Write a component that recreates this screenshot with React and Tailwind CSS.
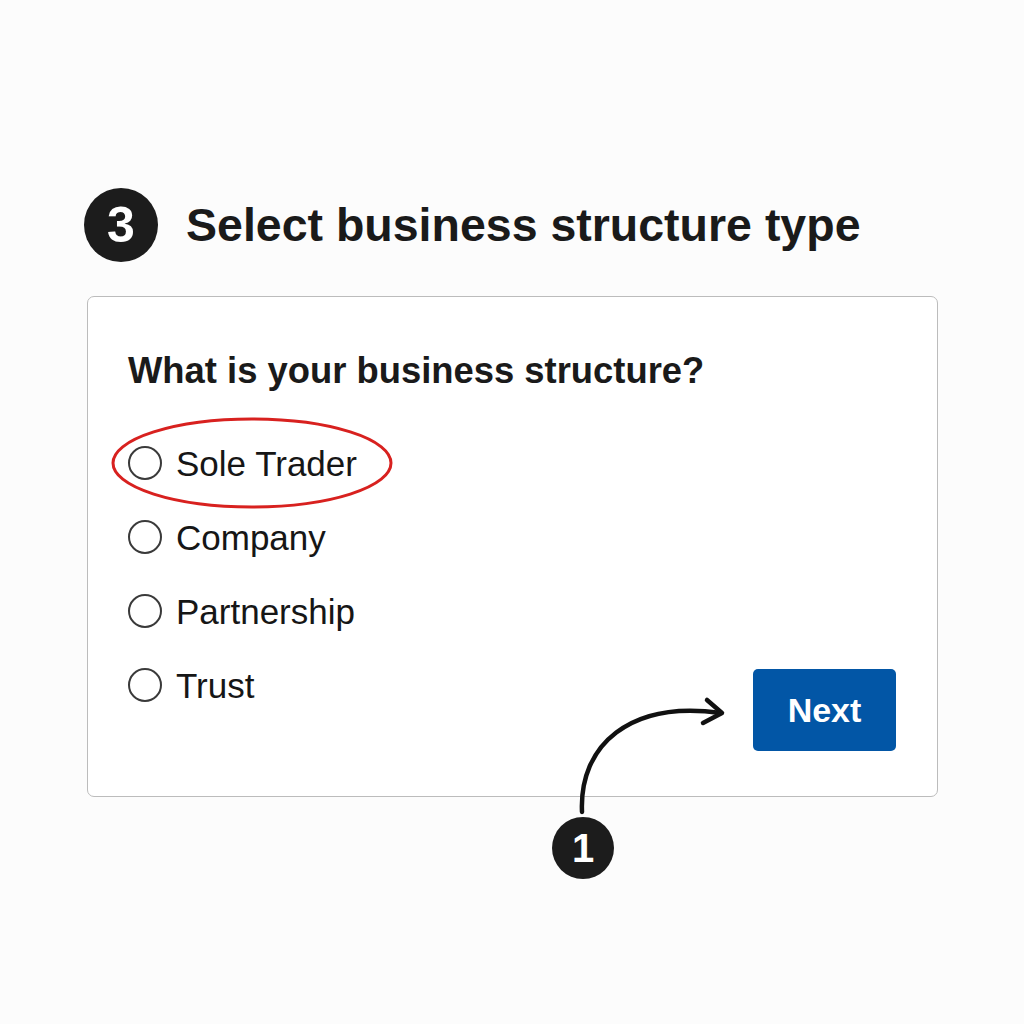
import React from 'react'

const options = ['Sole Trader', 'Company', 'Partnership', 'Trust']

function Radio(){
return <div className="w-[34px] h-[34px] rounded-full border-2 border-[#3a3a3a] bg-white shrink-0"/>
}

export default function App(){
return (
<div className="relative w-[1024px] h-[1024px] bg-[#fcfcfc] text-[#1a1a1a] overflow-hidden" style={{fontFamily:'"Liberation Sans", Arial, sans-serif'}}>
<div className="pt-[188px] pl-[84px] flex items-center gap-[28px]">
<div className="w-[74px] h-[74px] rounded-full bg-[#1c1c1c] text-white flex items-center justify-center text-[50px] font-bold leading-none">3</div>
<h1 className="text-[46.5px] font-bold leading-none">Select business structure type</h1>
</div>

<div className="ml-[87px] mt-[34px] w-[851px] h-[501px] bg-white border-[1.5px] border-[#bcbcbc] rounded-[7px] flex justify-between pl-[40px] pr-[41px] pb-[45px] pt-[56px]">
<div>
<div className="text-[36.4px] font-bold leading-[36px]">What is your business structure?</div>
<div className="mt-[37px] flex flex-col">
{options.map(o=>(
<div key={o} className="h-[74px] flex items-center gap-[14px]">
<Radio/>
<span className="text-[35px] leading-none text-[#161616]">{o}</span>
</div>
))}
</div>
</div>
<button className="self-end w-[143px] h-[82px] rounded-[5px] bg-[#0256a6] text-white text-[34px] font-bold leading-none">Next</button>
</div>

<svg className="absolute inset-0 pointer-events-none" width="1024" height="1024" viewBox="0 0 1024 1024">
<ellipse cx="252" cy="463" rx="139" ry="44" fill="none" stroke="#d8211f" strokeWidth="3"/>
<path d="M582 812 C579 745 630 700 721 713" fill="none" stroke="#111" strokeWidth="4.5" strokeLinecap="round"/>
<path d="M707 700 L722 713 L703 723" fill="none" stroke="#111" strokeWidth="4.5" strokeLinecap="round" strokeLinejoin="round"/>
</svg>
<div className="absolute left-[552px] top-[817px] w-[62px] h-[62px] rounded-full bg-[#1c1c1c] text-white flex items-center justify-center text-[40px] font-bold leading-none">1</div>
</div>
)
}
